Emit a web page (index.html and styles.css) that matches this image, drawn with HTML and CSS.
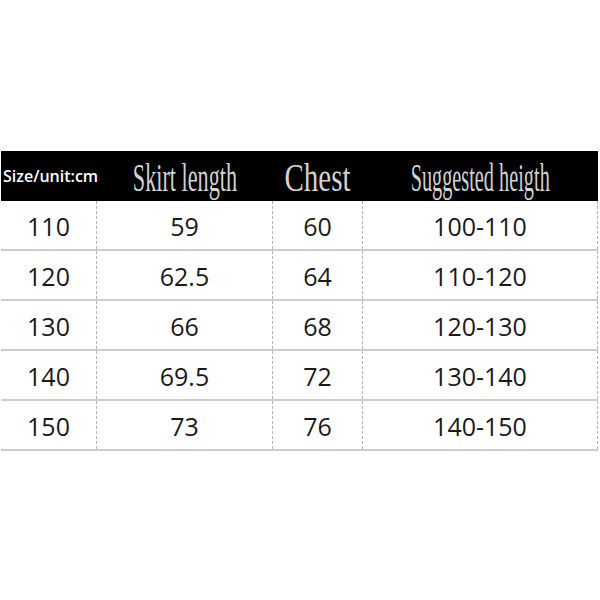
FILE: index.html
```html
<!DOCTYPE html>
<html>
<head>
<meta charset="utf-8">
<link rel="stylesheet" href="styles.css">
</head>
<body>
<div class="page">
  <div class="table">
    <div class="row head">
      <div class="cell h1"><span class="size">Size/unit:cm</span></div>
      <div class="cell"><span class="ser s-skirt">Skirt length</span></div>
      <div class="cell"><span class="ser s-chest">Chest</span></div>
      <div class="cell"><span class="ser s-sugg">Suggested heigth</span></div>
    </div>
    <div class="row body"><div class="cell">110</div><div class="cell">59</div><div class="cell">60</div><div class="cell">100-110</div></div>
    <div class="row body"><div class="cell">120</div><div class="cell">62.5</div><div class="cell">64</div><div class="cell">110-120</div></div>
    <div class="row body"><div class="cell">130</div><div class="cell">66</div><div class="cell">68</div><div class="cell">120-130</div></div>
    <div class="row body"><div class="cell">140</div><div class="cell">69.5</div><div class="cell">72</div><div class="cell">130-140</div></div>
    <div class="row body"><div class="cell">150</div><div class="cell">73</div><div class="cell">76</div><div class="cell">140-150</div></div>
  </div>
</div>
</body>
</html>
```

FILE: styles.css
```css
html, body {
  margin: 0;
  padding: 0;
  background: #ffffff;
}
.page {
  width: 600px;
  height: 600px;
  padding-top: 151px;
  padding-left: 1px;
  box-sizing: border-box;
}
.table {
  width: 597px;
}
.row {
  display: grid;
  grid-template-columns: 96px 176px 90px 235px;
}
.cell {
  display: flex;
  align-items: center;
  justify-content: center;
  box-sizing: border-box;
  overflow: visible;
  white-space: nowrap;
}
.head {
  background: #000000;
  height: 50px;
}
.head .cell {
  color: #e4e4e4;
}
.h1 {
  justify-content: flex-start;
  padding-left: 2px;
}
.size {
  font-family: "Open Sans", sans-serif;
  font-weight: 600;
  font-size: 16px;
  letter-spacing: 0;
  color: #ffffff;
}
.ser {
  display: inline-block;
  font-family: "Liberation Serif", serif;
  font-size: 40px;
  line-height: 40px;
  color: #d2d2d2;
  margin-top: 4px;
}
.s-skirt { transform: scaleX(0.555); }
.s-chest { transform: scaleX(0.725); }
.s-sugg { transform: scaleX(0.507); }
.body {
  height: 50px;
  border-bottom: 2px solid #cdcdcd;
  box-sizing: border-box;
}
.body:first-of-type {
  height: 51px;
}
.body .cell {
  font-family: "Open Sans", sans-serif;
  font-size: 25px;
  color: #1a1a1a;
  border-right: 1px dashed #b4b4b4;
  padding-top: 1px;
}
```
